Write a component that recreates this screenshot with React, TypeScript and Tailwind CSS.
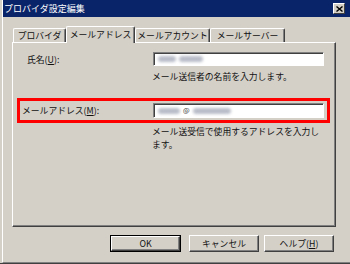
import React from 'react';

const FONT = { fontFamily: '"Noto Sans CJK JP", "Liberation Sans", sans-serif' };

function Tab({ label, width, active }: { label: string; width: string; active?: boolean }) {
  if (active) {
    return (
      <div
        className={`${width} h-[17px] relative z-10 -mb-px bg-[#d4d0c8] border-t border-l border-white border-r border-r-[#404040] shadow-[inset_-1px_0_#808080] rounded-tl-[2px] rounded-tr-[2px] flex items-center justify-center pb-[2px]`}
      >
        {label}
      </div>
    );
  }
  return (
    <div
      className={`${width} h-[14px] border-t border-l border-white border-r border-r-[#404040] shadow-[inset_-1px_0_#808080] rounded-tl-[2px] rounded-tr-[2px] flex items-center justify-center`}
    >
      {label}
    </div>
  );
}

function Blob({ w }: { w: string }) {
  return <span className={`${w} h-[6px] bg-[#b8bcc8] rounded-full blur-[1.5px] inline-block`} />;
}

function Field({ children, h }: { children?: React.ReactNode; h: string }) {
  return (
    <div
      className={`w-[171px] ${h} bg-white border-t border-l border-[#808080] border-b border-r border-b-white border-r-white shadow-[inset_1px_1px_#404040] flex items-center pl-[4px] gap-[3px]`}
    >
      {children}
    </div>
  );
}

function Button({ children, width, primary }: { children: React.ReactNode; width: string; primary?: boolean }) {
  const inner = (
    <div className="h-full w-full flex items-center justify-center border-t border-l border-white border-r border-b border-r-[#404040] border-b-[#404040] shadow-[inset_-1px_-1px_#808080]">
      {children}
    </div>
  );
  if (primary) {
    return <div className={`${width} h-[17px] border border-black`}>{inner}</div>;
  }
  return <div className={`${width} h-[17px]`}>{inner}</div>;
}

export default function App() {
  return (
    <div
      className="w-[350px] h-[264px] bg-[#d4d0c8] border-b border-[#404040] pl-[2px] overflow-hidden text-[8.8px] leading-[11px] text-[#111]"
      style={FONT}
    >
      <div className="h-full border-l border-white border-b border-b-[#808080] flex flex-col">
        {/* title bar */}
        <div className="h-[17px] bg-[#0a246a] flex items-center justify-between pr-[5px] shrink-0">
          <span className="text-white text-[9px] pl-[1px]">プロバイダ設定編集</span>
          <div className="w-[12px] h-[11px] bg-[#d4d0c8] border-t border-l border-white border-r border-b border-r-[#404040] border-b-[#404040] flex items-center justify-center">
            <svg width="7" height="6" viewBox="0 0 7 6">
              <path d="M0.5 0.5 L6.5 5.5 M6.5 0.5 L0.5 5.5" stroke="#000" strokeWidth="1.4" />
            </svg>
          </div>
        </div>

        <div className="pl-[9px] pt-[9px]">
          {/* tabs */}
          <div className="flex items-end h-[16px] pl-[1px]">
            <Tab label="プロバイダ" width="w-[53px]" />
            <Tab label="メールアドレス" width="w-[69px]" active />
            <Tab label="メールアカウント" width="w-[75px]" />
            <Tab label="メールサーバー" width="w-[75px]" />
          </div>

          {/* panel */}
          <div className="w-[324px] h-[185px] border-t border-l border-white border-r border-b border-r-[#404040] border-b-[#404040] shadow-[inset_-1px_-1px_#808080] pl-[4px] pr-[5px] pt-[9px]">
            <div className="flex items-center pl-[10px]">
              <span className="w-[126px]">
                氏名(<span className="underline">U</span>):
              </span>
              <Field h="h-[14px]">
                <Blob w="w-[18px]" />
                <Blob w="w-[24px]" />
              </Field>
            </div>
            <div className="ml-[135px] mt-[5px]">メール送信者の名前を入力します。</div>

            <div className="mt-[16px] border-[3px] border-[#ff0000] px-[2px] py-[2px] flex items-center">
              <span className="w-[131px]">
                メールアドレス(<span className="underline">M</span>):
              </span>
              <Field h="h-[15px]">
                <Blob w="w-[22px]" />
                <span className="text-[7px] leading-none text-[#333]">@</span>
                <Blob w="w-[38px]" />
              </Field>
            </div>
            <div className="ml-[135px] mt-[2px] leading-[13px]">
              メール送受信で使用するアドレスを入力し
              <br />
              ます。
            </div>
          </div>

          {/* buttons */}
          <div className="flex mt-[8px] pl-[98px]">
            <Button width="w-[71px]" primary>
              OK
            </Button>
            <div className="w-[8px]" />
            <Button width="w-[70px]">キャンセル</Button>
            <div className="w-[5px]" />
            <Button width="w-[70px]">
              ヘルプ(<span className="underline">H</span>)
            </Button>
          </div>
        </div>
      </div>
    </div>
  );
}
